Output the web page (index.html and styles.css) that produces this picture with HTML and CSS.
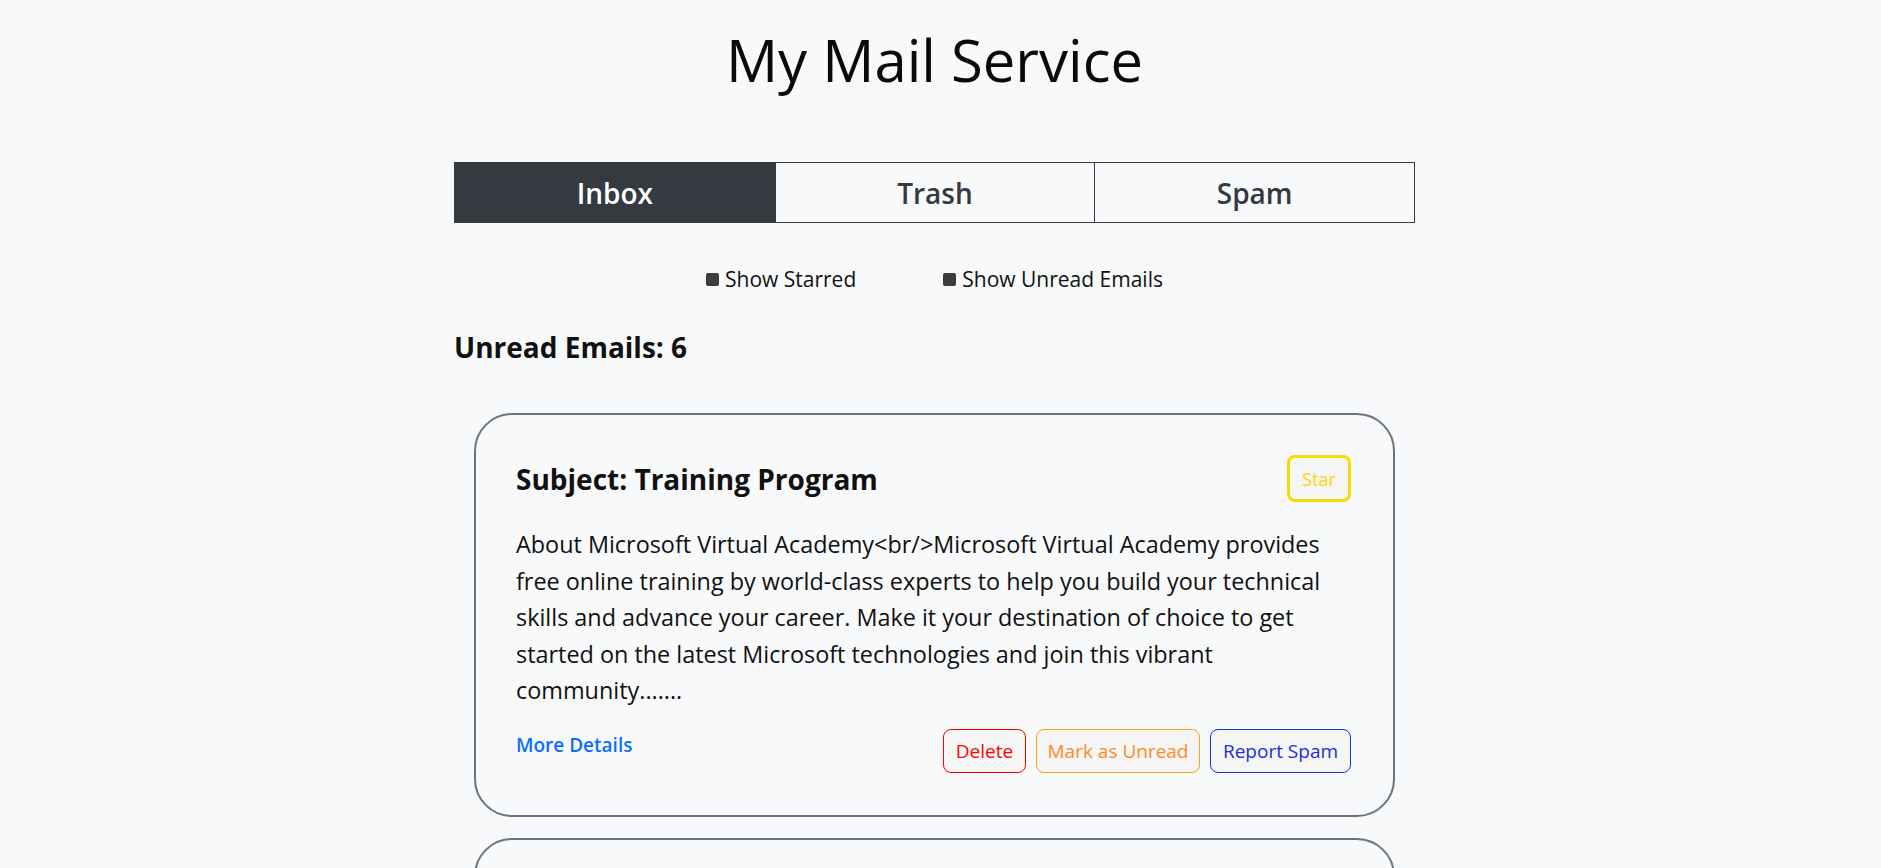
FILE: index.html
```html
<!DOCTYPE html>
<html lang="en">
<head>
<meta charset="utf-8">
<title>My Mail Service</title>
<link rel="stylesheet" href="styles.css">
</head>
<body>
<div class="app">
  <h1 class="title">My Mail Service</h1>
  <nav class="tabs">
    <button class="tab active">Inbox</button>
    <button class="tab">Trash</button>
    <button class="tab">Spam</button>
  </nav>
  <div class="filters">
    <label class="filter"><span class="box"></span>Show Starred</label>
    <label class="filter"><span class="box"></span>Show Unread Emails</label>
  </div>
  <h2 class="unread">Unread Emails: 6</h2>
  <div class="list">
    <article class="card">
      <div class="card-head">
        <h3 class="subject">Subject: Training Program</h3>
        <button class="btn btn-star">Star</button>
      </div>
      <p class="body-text">About Microsoft Virtual Academy&lt;br/&gt;Microsoft Virtual Academy provides free online training by world-class experts to help you build your technical skills and advance your career. Make it your destination of choice to get started on the latest Microsoft technologies and join this vibrant community.......</p>
      <div class="card-foot">
        <a class="more" href="#">More Details</a>
        <div class="actions">
          <button class="btn btn-delete">Delete</button>
          <button class="btn btn-unread">Mark as Unread</button>
          <button class="btn btn-spam">Report Spam</button>
        </div>
      </div>
    </article>
    <article class="card">
      <div class="card-head">
        <h3 class="subject">Subject: Welcome to your new mailbox</h3>
        <button class="btn btn-star">Star</button>
      </div>
      <p class="body-text">Thank you for signing up. Your mailbox is ready to use. Explore the features and keep your inbox organised.......</p>
      <div class="card-foot">
        <a class="more" href="#">More Details</a>
        <div class="actions">
          <button class="btn btn-delete">Delete</button>
          <button class="btn btn-unread">Mark as Unread</button>
          <button class="btn btn-spam">Report Spam</button>
        </div>
      </div>
    </article>
  </div>
</div>
</body>
</html>
```

FILE: styles.css
```css
* { box-sizing: border-box; }
html, body { margin: 0; padding: 0; }
body {
  background: #f8f9fa;
  font-family: "Open Sans", "Noto Sans", sans-serif;
  color: #111;
  padding-right: 12px;
}
.app {
  width: 961px;
  margin: 0 auto;
  padding-top: 24px;
  padding-bottom: 40px;
}
.title {
  margin: 0;
  font-size: 58px;
  font-weight: 400;
  line-height: 72px;
  text-align: center;
  color: #0a0a0a;
}
.tabs {
  margin-top: 66px;
  display: grid;
  grid-template-columns: repeat(3, 1fr);
  border: 1px solid #343a40;
  height: 61px;
}
.tab {
  font-family: inherit;
  font-size: 28px;
  font-weight: 600;
  color: #343a40;
  background: #f8f9fa;
  border: 0;
  border-left: 1px solid #343a40;
  padding: 0;
  cursor: pointer;
}
.tab:first-child { border-left: 0; }
.tab.active { background: #343a40; color: #fff; }
.filters {
  display: flex;
  justify-content: center;
  gap: 87px;
  margin-top: 42px;
  font-size: 21px;
  line-height: 28px;
}
.filter { display: flex; align-items: center; }
.box {
  width: 13px;
  height: 13px;
  background: #3c3c3c;
  border-radius: 2px;
  margin-right: 6px;
}
.unread {
  margin: 38px 0 0;
  font-size: 28px;
  font-weight: 700;
  line-height: 32px;
  color: #111;
}
.list {
  padding: 50px 20px 0;
  display: flex;
  flex-direction: column;
  gap: 21px;
}
.card {
  border: 2px solid #6c757d;
  border-radius: 38px;
  padding: 40px 42px 42px 40px;
}
.card-head {
  display: flex;
  justify-content: space-between;
  align-items: center;
}
.subject {
  margin: 0;
  font-size: 28px;
  font-weight: 700;
  line-height: 32px;
  color: #111;
}
.btn {
  font-family: inherit;
  background: #f5f5f5;
  border: 1px solid;
  border-radius: 8px;
  font-size: 19px;
  line-height: 24px;
  padding: 9px 0;
  cursor: pointer;
}
.btn-star {
  border: 3px solid #ffd700;
  color: #ffd700;
  width: 64px;
  height: 47px;
  padding: 0;
  font-size: 18px;
}
.body-text {
  margin: 24px 0 0;
  font-size: 23.4px;
  line-height: 36.5px;
  color: #111;
}
.card-foot {
  margin-top: 20px;
  display: flex;
  justify-content: space-between;
  align-items: flex-start;
}
.more {
  color: #0d6efd;
  font-weight: 600;
  font-size: 19px;
  text-decoration: none;
  line-height: 32px;
}
.actions { display: flex; gap: 10px; }
.btn-delete { color: #ff0000; border-color: #ff0000; width: 83px; }
.btn-unread { color: #ff8c1a; border-color: #ff9d1f; width: 164px; }
.btn-spam { color: #1a2fd6; border-color: #1a2fd6; width: 141px; }
```
